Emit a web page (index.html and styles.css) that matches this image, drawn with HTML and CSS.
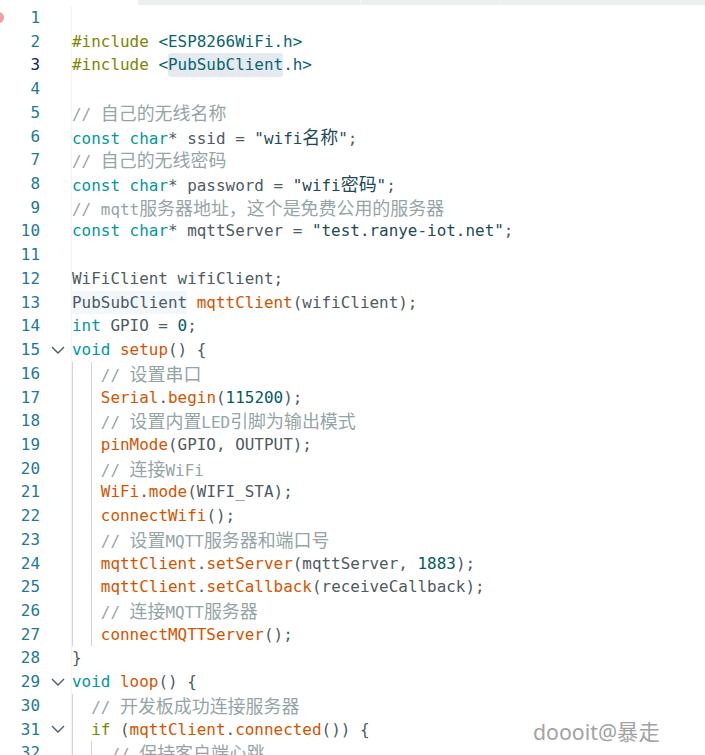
FILE: index.html
```html
<!DOCTYPE html>
<html lang="zh">
<head>
<meta charset="utf-8">
<title>editor</title>
<link rel="stylesheet" href="styles.css">
</head>
<body>
<div class="topbar"><div class="tabs"><span class="tab t1"></span><span class="tab t2"></span><span class="tab t3"></span></div></div>
<div class="editor">
  <div class="line"><span class="num">1<span class="bp"></span></span><span class="fold"></span><span class="code"></span></div>
  <div class="line"><span class="num">2</span><span class="fold"></span><span class="code"><span class="pp">#include</span> <span class="hd">&lt;ESP8266WiFi.h&gt;</span></span></div>
  <div class="line"><span class="num cur">3</span><span class="fold"></span><span class="code"><span class="pp">#include</span> <span class="hd">&lt;<span class="hl">PubSubClient</span>.h&gt;</span></span></div>
  <div class="line"><span class="num">4</span><span class="fold"></span><span class="code"></span></div>
  <div class="line"><span class="num">5</span><span class="fold"></span><span class="code"><span class="cm">// <span class="zh">自己的无线名称</span></span></span></div>
  <div class="line"><span class="num">6</span><span class="fold"></span><span class="code"><span class="kw">const</span> <span class="kw">char</span>* ssid = <span class="st">"wifi<span class="zh">名称</span>"</span>;</span></div>
  <div class="line"><span class="num">7</span><span class="fold"></span><span class="code"><span class="cm">// <span class="zh">自己的无线密码</span></span></span></div>
  <div class="line"><span class="num">8</span><span class="fold"></span><span class="code"><span class="kw">const</span> <span class="kw">char</span>* password = <span class="st">"wifi<span class="zh">密码</span>"</span>;</span></div>
  <div class="line"><span class="num">9</span><span class="fold"></span><span class="code"><span class="cm">// mqtt<span class="zh">服务器地址，这个是免费公用的服务器</span></span></span></div>
  <div class="line"><span class="num">10</span><span class="fold"></span><span class="code"><span class="kw">const</span> <span class="kw">char</span>* mqttServer = <span class="st">"test.ranye-iot.net"</span>;</span></div>
  <div class="line"><span class="num">11</span><span class="fold"></span><span class="code"></span></div>
  <div class="line"><span class="num">12</span><span class="fold"></span><span class="code">WiFiClient wifiClient;</span></div>
  <div class="line"><span class="num">13</span><span class="fold"></span><span class="code"><span class="hl2">PubSubClient</span> <span class="fn">mqttClient</span>(wifiClient);</span></div>
  <div class="line"><span class="num">14</span><span class="fold"></span><span class="code"><span class="kw">int</span> GPIO = <span class="nu">0</span>;</span></div>
  <div class="line"><span class="num">15</span><span class="fold"><svg class="chev" width="14" height="8" viewBox="0 0 14 8"><polyline points="1,1 7,7 13,1"/></svg></span><span class="code"><span class="kw">void</span> <span class="fn">setup</span>() {</span></div>
  <div class="line"><span class="num">16</span><span class="fold"></span><span class="code"><span class="g">  </span><span class="g"> </span><span class="cm">// <span class="zh">设置串口</span></span></span></div>
  <div class="line"><span class="num">17</span><span class="fold"></span><span class="code"><span class="g">  </span><span class="g"> </span><span class="fn">Serial</span>.<span class="fn">begin</span>(<span class="nu">115200</span>);</span></div>
  <div class="line"><span class="num">18</span><span class="fold"></span><span class="code"><span class="g">  </span><span class="g"> </span><span class="cm">// <span class="zh">设置内置</span>LED<span class="zh">引脚为输出模式</span></span></span></div>
  <div class="line"><span class="num">19</span><span class="fold"></span><span class="code"><span class="g">  </span><span class="g"> </span><span class="fn">pinMode</span>(GPIO, OUTPUT);</span></div>
  <div class="line"><span class="num">20</span><span class="fold"></span><span class="code"><span class="g">  </span><span class="g"> </span><span class="cm">// <span class="zh">连接</span>WiFi</span></span></div>
  <div class="line"><span class="num">21</span><span class="fold"></span><span class="code"><span class="g">  </span><span class="g"> </span><span class="fn">WiFi</span>.<span class="fn">mode</span>(WIFI_STA);</span></div>
  <div class="line"><span class="num">22</span><span class="fold"></span><span class="code"><span class="g">  </span><span class="g"> </span><span class="fn">connectWifi</span>();</span></div>
  <div class="line"><span class="num">23</span><span class="fold"></span><span class="code"><span class="g">  </span><span class="g"> </span><span class="cm">// <span class="zh">设置</span>MQTT<span class="zh">服务器和端口号</span></span></span></div>
  <div class="line"><span class="num">24</span><span class="fold"></span><span class="code"><span class="g">  </span><span class="g"> </span><span class="fn">mqttClient</span>.<span class="fn">setServer</span>(mqttServer, <span class="nu">1883</span>);</span></div>
  <div class="line"><span class="num">25</span><span class="fold"></span><span class="code"><span class="g">  </span><span class="g"> </span><span class="fn">mqttClient</span>.<span class="fn">setCallback</span>(receiveCallback);</span></div>
  <div class="line"><span class="num">26</span><span class="fold"></span><span class="code"><span class="g">  </span><span class="g"> </span><span class="cm">// <span class="zh">连接</span>MQTT<span class="zh">服务器</span></span></span></div>
  <div class="line"><span class="num">27</span><span class="fold"></span><span class="code"><span class="g">  </span><span class="g"> </span><span class="fn">connectMQTTServer</span>();</span></div>
  <div class="line"><span class="num">28</span><span class="fold"></span><span class="code">}</span></div>
  <div class="line"><span class="num">29</span><span class="fold"><svg class="chev" width="14" height="8" viewBox="0 0 14 8"><polyline points="1,1 7,7 13,1"/></svg></span><span class="code"><span class="kw">void</span> <span class="fn">loop</span>() {</span></div>
  <div class="line"><span class="num">30</span><span class="fold"></span><span class="code"><span class="g">  </span><span class="cm">// <span class="zh">开发板成功连接服务器</span></span></span></div>
  <div class="line"><span class="num">31</span><span class="fold"><svg class="chev" width="14" height="8" viewBox="0 0 14 8"><polyline points="1,1 7,7 13,1"/></svg></span><span class="code"><span class="g">  </span><span class="ctl">if</span> (<span class="fn">mqttClient</span>.<span class="fn">connected</span>()) {</span></div>
  <div class="line"><span class="num">32</span><span class="fold"></span><span class="code"><span class="g">  </span><span class="g">  </span><span class="cm">// <span class="zh">保持客户端心跳</span></span></span></div>
</div>
<div class="watermark">doooit@<span class="wzh">暴走</span></div>
</body>
</html>
```
FILE: styles.css
```css
html, body {
  margin: 0;
  padding: 0;
  background: #ffffff;
  overflow: hidden;
}
body {
  width: 705px;
  height: 755px;
  position: relative;
  font-family: "DejaVu Sans Mono", "Noto Sans CJK SC", monospace;
  font-size: 15.95px;
  color: #4e5b61;
}
.topbar {
  height: 5px;
  display: flex;
}
.tabs {
  margin-left: 138px;
  flex: 1;
  display: flex;
  background: #ebf0ef;
}
.tab { height: 100%; }
.t1 { width: 222px; border-right: 1px solid #f4f7f6; }
.t2 { width: 139px; border-right: 1px solid #f4f7f6; }
.t3 { flex: 1; }

.editor {
  display: flex;
  flex-direction: column;
  padding-top: 1px;
}
.line {
  display: grid;
  grid-template-columns: 40px 32px 1fr;
  height: 23.73px;
  line-height: 23.73px;
}
.num {
  position: relative;
  text-align: right;
  color: #237893;
}
.num.cur { color: #0b216f; }
.bp {
  position: absolute;
  left: -7px;
  top: 6px;
  width: 11px;
  height: 11px;
  border-radius: 50%;
  background: #f39d9d;
}
.fold {
  display: flex;
  align-items: center;
  justify-content: center;
  padding-left: 4px;
  box-shadow: inset -1px 0 0 #f2f3f3;
}
.chev {
  fill: none;
  stroke: #4b5a67;
  stroke-width: 1.4;
}
.code {
  white-space: pre;
}
.g {
  display: inline-block;
  height: 23.73px;
  vertical-align: top;
  box-shadow: inset 1px 0 0 #d4d4d4;
}
.zh {
  font-family: "Noto Sans CJK SC", sans-serif;
  font-size: 17.95px;
}
.pp { color: #7d8600; }
.ctl { color: #6f8e00; }
.hd { color: #0a6470; }
.kw { color: #00979d; }
.fn { color: #d35400; }
.cm { color: #95a5a6; }
.st { color: #1f4a55; }
.nu { color: #005c5f; }
.hl {
  background: #e4eaf0;
  border-radius: 3px;
  display: inline-block;
  height: 23.73px;
  vertical-align: top;
}
.hl2 {
  background: #f2f7fc;
  display: inline-block;
  height: 23.73px;
  vertical-align: top;
}
.watermark {
  position: absolute;
  left: 533px;
  top: 715px;
  font-family: "Noto Sans", "Noto Sans CJK SC", sans-serif;
  font-size: 21.3px;
  color: #a3a3a3;
  white-space: nowrap;
}
.wzh {
  font-family: "Noto Sans CJK SC", sans-serif;
}
```
